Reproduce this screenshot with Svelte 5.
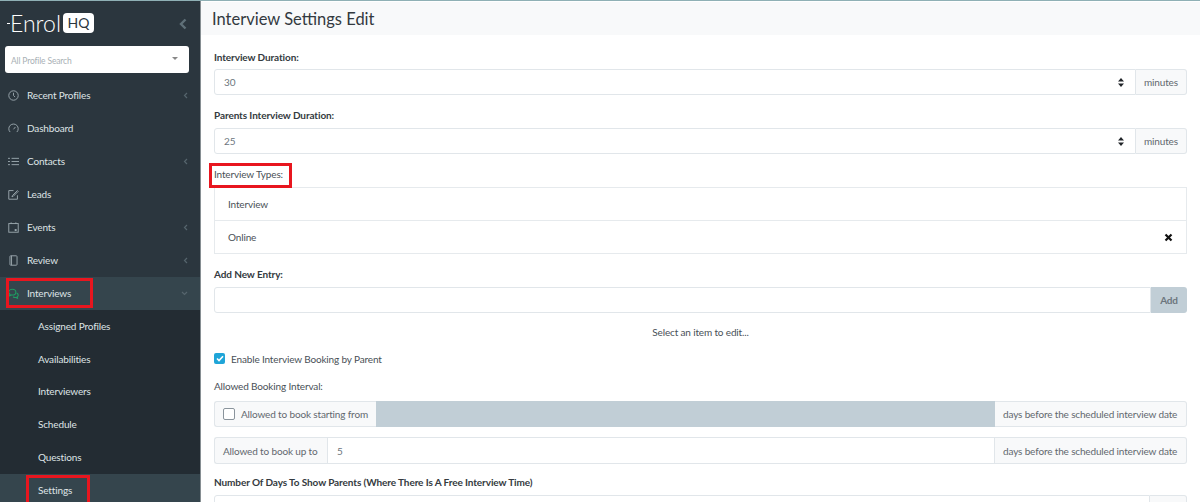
<script>
  const menu = [
    { label: 'Recent Profiles', icon: 'clock', arrow: true },
    { label: 'Dashboard', icon: 'gauge' },
    { label: 'Contacts', icon: 'list', arrow: true },
    { label: 'Leads', icon: 'edit' },
    { label: 'Events', icon: 'calendar', arrow: true },
    { label: 'Review', icon: 'tablet', arrow: true }
  ];
  const subMenu = ['Assigned Profiles', 'Availabilities', 'Interviewers', 'Schedule', 'Questions'];
</script>

{#snippet spinner()}
  <svg class="spinner" width="6" height="9" viewBox="0 0 6 9"><path d="M3 0 6 3.6H0zM3 9 0 5.4h6z" fill="#212529" /></svg>
{/snippet}

{#snippet icon(name)}
  <svg class="nav-icon" width="11" height="11" viewBox="0 0 14 14" fill="none" stroke="#9aa7ad" stroke-width="1.200">
    {#if name === 'clock'}
      <circle cx="7" cy="7" r="6" /><path d="M7 3.5V7l2 2" />
    {:else if name === 'gauge'}
      <path d="M2.7 11.500A6 6 0 1 1 11.300 11.500" /><path d="M7 8l2.500-3" />
    {:else if name === 'list'}
      <path d="M4.500 3H14M4.500 7H14M4.500 11H14M0 3h2.500M0 7h2.500M0 11h2.500" />
    {:else if name === 'edit'}
      <path d="M12 8v5H1V2h6" /><path d="M5.500 8.500 12 2l1 1-6.500 6.500-1.500.3z" />
    {:else if name === 'calendar'}
      <rect x="1" y="2" width="12" height="11" /><path d="M4 .5v2M10 .5v2" /><rect x="8.500" y="9" width="2.500" height="2.500" fill="#9aa7ad" stroke="none" />
    {:else if name === 'tablet'}
      <rect x="2.500" y="1" width="9" height="12" rx="1" /><path d="M4.500 1v12" />
    {/if}
  </svg>
{/snippet}

<div class="page">
  <aside class="sidebar">
    <div class="brand">
      <div class="logo">
        <i class="logo-tick"></i>
        <span class="logo-word">Enrol</span>
        <span class="logo-hq">HQ</span>
      </div>
      <svg class="collapse" width="8" height="12" viewBox="0 0 8 12"><path d="M6.500 1.500 2 6l4.500 4.500" fill="none" stroke="#5f7078" stroke-width="2.400" /></svg>
    </div>

    <div class="search">
      <span>All Profile Search</span>
      <i class="caret"></i>
    </div>

    <nav>
      {#each menu as item}
        <div class="nav-row">
          {@render icon(item.icon)}
          <span>{item.label}</span>
          {#if item.arrow}
            <svg class="arrow" width="5" height="7" viewBox="0 0 5 7"><path d="M4 1 1.500 3.500 4 6" fill="none" stroke="#56656d" stroke-width="1.200" /></svg>
          {/if}
        </div>
      {/each}
      <div class="nav-row active">
        <svg class="nav-icon" width="11" height="11" viewBox="0 0 14 14" fill="none" stroke="#1f9d62" stroke-width="1.400">
          <path d="M5.500 1.500C3 1.500 1 3.200 1 5.300c0 1 .5 1.900 1.400 2.600L2 10l2.300-1.200c.4.100.8.100 1.200.100C8 8.900 10 7.400 10 5.300S8 1.500 5.500 1.500z" />
          <path d="M11 6.500c1.200.6 2 1.500 2 2.700 0 .9-.5 1.600-1.200 2.200l.3 1.600-2-1c-1.300.2-2.700-.1-3.600-.9" />
        </svg>
        <span>Interviews</span>
        <svg class="arrow" width="7" height="5" viewBox="0 0 7 5"><path d="M1 1l2.500 2.500L6 1" fill="none" stroke="#56656d" stroke-width="1.200" /></svg>
      </div>
      <div class="sub-menu">
        {#each subMenu as label}
          <div class="sub-row">{label}</div>
        {/each}
        <div class="sub-row current">Settings</div>
      </div>
    </nav>
  </aside>

  <main class="content">
    <header class="title-bar"><h1>Interview Settings Edit</h1></header>

    <form class="form">
      <label class="strong first">Interview Duration:</label>
      <div class="group">
        <div class="control select">30{@render spinner()}</div>
        <div class="addon unit">minutes</div>
      </div>

      <label class="strong gap-a">Parents Interview Duration:</label>
      <div class="group">
        <div class="control select">25{@render spinner()}</div>
        <div class="addon unit">minutes</div>
      </div>

      <label class="plain types">Interview Types:</label>
      <ul class="entries">
        <li>Interview</li>
        <li>Online
          <svg width="9" height="9" viewBox="0 0 9 9"><path d="M1.500 1.500l6 6M7.500 1.500l-6 6" stroke="#111" stroke-width="2.200" /></svg>
        </li>
      </ul>

      <label class="strong add-label">Add New Entry:</label>
      <div class="group">
        <div class="control"></div>
        <div class="add-btn">Add</div>
      </div>

      <p class="hint">Select an item to edit...</p>

      <div class="enable">
        <span class="tick">
          <svg width="8" height="7" viewBox="0 0 8 7"><path d="M1 3.500 3 5.500 7 1.200" fill="none" stroke="#fff" stroke-width="1.600" /></svg>
        </span>
        Enable Interview Booking by Parent
      </div>

      <label class="plain interval">Allowed Booking Interval:</label>
      <div class="group">
        <div class="addon left check-addon"><span class="box"></span>Allowed to book starting from</div>
        <div class="control disabled"></div>
        <div class="addon wide">days before the scheduled interview date</div>
      </div>
      <div class="group second">
        <div class="addon left upto">Allowed to book up to</div>
        <div class="control">5</div>
        <div class="addon wide">days before the scheduled interview date</div>
      </div>

      <label class="strong days">Number Of Days To Show Parents (Where There Is A Free Interview Time)</label>
      <div class="group">
        <div class="control"></div>
        <div class="addon stub"></div>
      </div>
    </form>
  </main>

  <!-- annotation boxes drawn on top of the screenshot -->
  <div class="mark" style="left:6px;top:277px;width:87px;height:30px"></div>
  <div class="mark" style="left:26px;top:474px;width:64px;height:32px"></div>
  <div class="mark" style="left:209px;top:162px;width:83px;height:25px"></div>
</div>

<style>
  :global(body) {
    margin: 0;
    background: #fff;
    overflow: hidden;
  }
  .page {
    position: relative;
    display: flex;
    height: 501px;
    overflow: hidden;
    border-top: 1px solid #8fb0b5;
    font-family: "Lato", "Open Sans", sans-serif;
    font-size: 10px;
    letter-spacing: -.15px;
    color: #495057;
  }
  .sidebar {
    flex: none;
    width: 200px;
    background: #2b363e;
    border-right: 1px solid #868e92;
    color: #dfe4e6;
  }
  .brand {
    display: flex;
    align-items: center;
    justify-content: space-between;
    height: 45px;
    padding: 0 13px 0 7px;
  }
  .logo {
    display: flex;
    align-items: center;
    margin-top: -1px;
  }
  .logo-tick {
    width: 3px;
    height: 1px;
    margin-top: 1px;
    background: #fff;
  }
  .logo-word {
    font-size: 23px;
    font-weight: 300;
    letter-spacing: 0;
    color: #fff;
    margin-right: 2px;
  }
  .logo-hq {
    width: 31px;
    height: 20px;
    background: #fff;
    color: #2b363e;
    border-radius: 4px;
    font-size: 14px;
    line-height: 20px;
    letter-spacing: 0;
    text-align: center;
  }
  .search {
    display: flex;
    align-items: center;
    justify-content: space-between;
    box-sizing: border-box;
    height: 27px;
    margin: 0 11px 0 5px;
    padding: 3px 11px 0 6px;
    background: #fff;
    border-radius: 3px;
    color: #a9b0b5;
    font-size: 8.5px;
  }
  .caret {
    width: 0;
    height: 0;
    border: 3.500px solid transparent;
    border-top: 3.500px solid #888;
    border-bottom: 0;
    margin-top: -6px;
  }
  nav {
    margin-top: 6px;
  }
  .nav-row {
    display: flex;
    align-items: center;
    height: 32.95px;
    padding: 0 12px 0 8px;
  }
  .nav-row.active {
    background: #35454d;
  }
  .nav-icon {
    flex: none;
    margin-right: 8px;
  }
  .arrow {
    margin-left: auto;
  }
  .sub-menu {
    background: #232c33;
  }
  .sub-row {
    height: 32.95px;
    line-height: 32.95px;
    padding-left: 38px;
  }
  .sub-row.current {
    background: #35454d;
  }
  .content {
    flex: 1;
    min-width: 0;
  }
  .title-bar {
    height: 33px;
    margin-top: 1px;
    padding-left: 11px;
    background: #f8f9fa;
    display: flex;
    align-items: center;
  }
  h1 {
    margin: 0;
    font-size: 16.5px;
    font-weight: 400;
    letter-spacing: 0;
    color: #33393f;
  }
  .form {
    padding: 0 13px;
  }
  label {
    display: block;
    height: 16px;
    line-height: 16px;
  }
  .strong {
    font-weight: 700;
    letter-spacing: -.1px;
    color: #343a40;
  }
  .plain {
    color: #495057;
  }
  .first {
    margin-top: 14px;
    margin-bottom: 4px;
  }
  .gap-a {
    margin-top: 11.5px;
    margin-bottom: 5px;
  }
  .types {
    margin-top: 11.7px;
    margin-bottom: 5px;
  }
  .group {
    display: flex;
    height: 26.4px;
  }
  .control {
    flex: 1;
    min-width: 0;
    display: flex;
    align-items: center;
    justify-content: space-between;
    padding: 0 9px;
    border: 1px solid #e1e6ea;
    border-radius: 3px 0 0 3px;
    background: #fff;
    color: #6c757d;
  }
  .select {
    padding-right: 11px;
  }
  .disabled {
    background: #c1ced6;
    border-color: #c1ced6;
    border-radius: 0;
  }
  .addon {
    display: flex;
    align-items: center;
    box-sizing: border-box;
    padding: 0 8px;
    background: #f8f9fa;
    border: 1px solid #e1e6ea;
    border-left: 0;
    border-radius: 0 3px 3px 0;
    color: #62686e;
    white-space: nowrap;
  }
  .addon.left {
    border-left: 1px solid #e1e6ea;
    border-right: 0;
    border-radius: 3px 0 0 3px;
  }
  .group .addon.left + .control {
    border-radius: 0;
  }
  .unit {
    width: 51px;
  }
  .wide {
    width: 192px;
  }
  .check-addon {
    width: 162px;
  }
  .upto {
    width: 113px;
  }
  .stub {
    width: 37px;
  }
  .box {
    flex: none;
    width: 10px;
    height: 10px;
    margin-right: 6px;
    border: 1px solid #8a949c;
    border-radius: 2px;
    background: #fff;
  }
  .entries {
    margin: 0;
    padding: 0;
    list-style: none;
    border: 1px solid #e6eaed;
  }
  .entries li {
    display: flex;
    align-items: center;
    justify-content: space-between;
    box-sizing: border-box;
    height: 32.5px;
    padding: 0 13px;
    color: #495057;
  }
  .entries li + li {
    border-top: 1px solid #e6eaed;
  }
  .add-label {
    margin-top: 12px;
    margin-bottom: 5px;
  }
  .add-btn {
    display: flex;
    align-items: center;
    justify-content: center;
    width: 36px;
    background: #c1ced6;
    border-radius: 0 3px 3px 0;
    color: #6c757d;
    font-weight: 700;
  }
  .hint {
    height: 16px;
    margin: 10.6px 0 0;
    line-height: 16px;
    text-align: center;
    color: #495057;
  }
  .enable {
    display: flex;
    align-items: center;
    height: 16px;
    margin-top: 11px;
  }
  .tick {
    display: flex;
    align-items: center;
    justify-content: center;
    width: 11px;
    height: 11px;
    margin-right: 6px;
    border-radius: 2px;
    background: #1fa5d8;
  }
  .interval {
    margin-top: 11px;
    margin-bottom: 7px;
  }
  .second {
    margin-top: 10px;
  }
  .days {
    margin-top: 10px;
    margin-bottom: 5.5px;
  }
  .mark {
    position: absolute;
    box-sizing: border-box;
    border: 3px solid #e8161f;
    pointer-events: none;
  }
</style>
